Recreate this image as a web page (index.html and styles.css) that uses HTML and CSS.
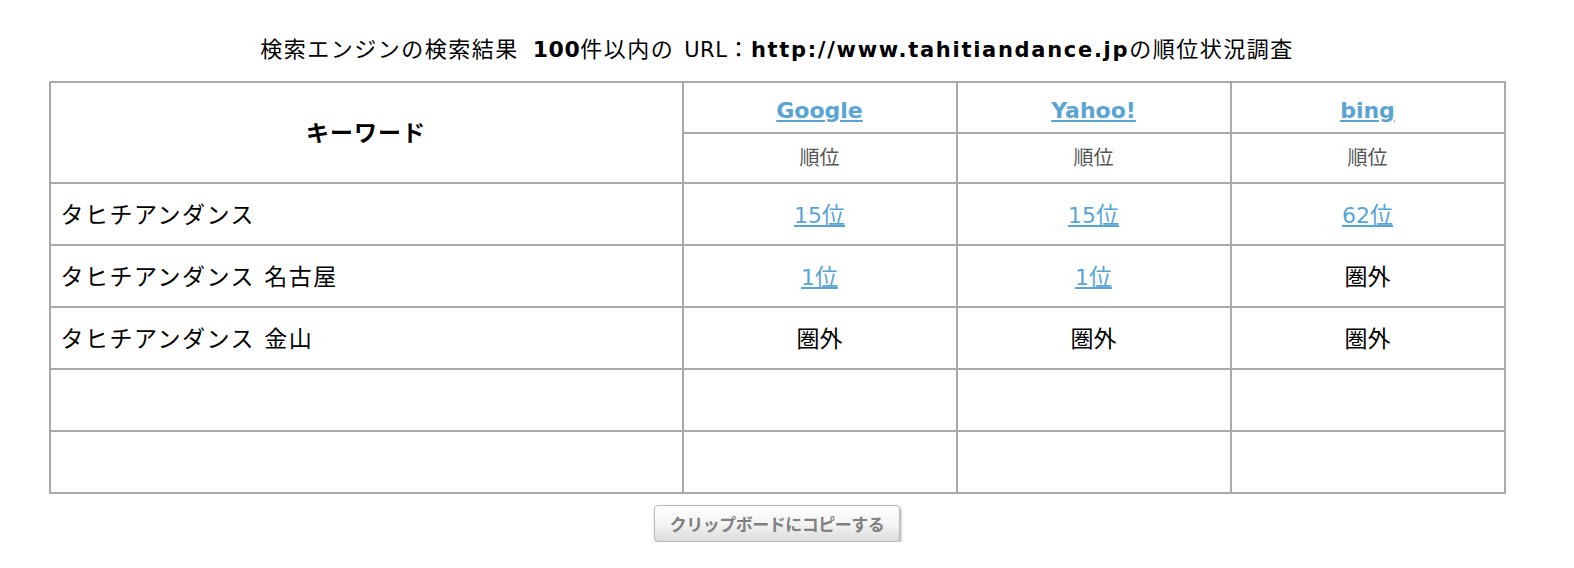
FILE: index.html
```html
<!DOCTYPE html>
<html lang="ja">
<head>
<meta charset="utf-8">
<title>順位状況調査</title>
<link rel="stylesheet" href="styles.css">
</head>
<body>
<div class="page">
  <h1 class="title">検索エンジンの検索結果<b class="en num100">100</b>件以内の<span class="en-r">URL</span>：<b class="en url">http://www.tahitiandance.jp</b>の順位状況調査</h1>
  <table class="rank">
    <colgroup>
      <col class="c-key">
      <col class="c-eng">
      <col class="c-eng">
      <col class="c-eng">
    </colgroup>
    <thead>
      <tr class="h1">
        <th rowspan="2" class="key-head">キーワード</th>
        <th><a href="#" class="eng">Google</a></th>
        <th><a href="#" class="eng">Yahoo!</a></th>
        <th><a href="#" class="eng">bing</a></th>
      </tr>
      <tr class="h2">
        <th class="sub">順位</th>
        <th class="sub">順位</th>
        <th class="sub">順位</th>
      </tr>
    </thead>
    <tbody>
      <tr>
        <td class="kw">タヒチアンダンス</td>
        <td><a href="#" class="rk"><span class="num">15</span>位</a></td>
        <td><a href="#" class="rk"><span class="num">15</span>位</a></td>
        <td><a href="#" class="rk"><span class="num">62</span>位</a></td>
      </tr>
      <tr>
        <td class="kw">タヒチアンダンス<span class="gap"></span>名古屋</td>
        <td><a href="#" class="rk"><span class="num">1</span>位</a></td>
        <td><a href="#" class="rk"><span class="num">1</span>位</a></td>
        <td class="out">圏外</td>
      </tr>
      <tr>
        <td class="kw">タヒチアンダンス<span class="gap"></span>金山</td>
        <td class="out">圏外</td>
        <td class="out">圏外</td>
        <td class="out">圏外</td>
      </tr>
      <tr>
        <td class="kw"></td><td></td><td></td><td></td>
      </tr>
      <tr>
        <td class="kw"></td><td></td><td></td><td></td>
      </tr>
    </tbody>
  </table>
  <div class="actions">
    <button type="button" class="copy">クリップボードにコピーする</button>
  </div>
</div>
</body>
</html>
```

FILE: styles.css
```css
html, body {
  margin: 0;
  padding: 0;
  background: #ffffff;
}

body {
  font-family: "Noto Sans CJK JP", "DejaVu Sans", sans-serif;
  color: #000;
}

.page {
  width: 1554px;
  padding-top: 30px;
}

.title {
  margin: 0 0 14px;
  text-align: center;
  font-size: 22px;
  font-weight: normal;
  line-height: 34px;
  letter-spacing: 1.5px;
}

.title .en,
.title .en-r {
  font-family: "DejaVu Sans", sans-serif;
  font-size: 21px;
}

.title .en {
  font-weight: bold;
}

.title .num100 {
  margin-left: 14px;
  font-size: 22px;
  letter-spacing: 0.5px;
}

.title .en-r {
  margin-left: 10px;
  letter-spacing: 0.5px;
}

.title .url {
  letter-spacing: 1.7px;
}

.rank {
  width: 1454px;
  margin: 0 auto;
  border-collapse: collapse;
  border: 2px solid #aaaaaa;
  table-layout: fixed;
}

.c-key { width: 633px; }
.c-eng { width: 274px; }

.rank th,
.rank td {
  border: 2px solid #aaaaaa;
  padding: 0;
  text-align: center;
  vertical-align: middle;
  font-size: 23px;
}

.rank tr.h1 th {
  height: 49px;
}

.rank tr.h2 th {
  height: 45px;
}

.rank tbody td {
  height: 57px;
  padding-bottom: 3px;
}

.rank th.key-head {
  font-weight: bold;
  font-size: 23px;
  letter-spacing: 1px;
  padding-bottom: 4px;
}

.eng {
  font-family: "DejaVu Sans", sans-serif;
  font-weight: bold;
  font-size: 22px;
  color: #5aa4d3;
  text-decoration: underline;
}

.rank th.sub {
  font-weight: normal;
  color: #555555;
  font-size: 20px;
  padding-bottom: 3px;
}

.rk {
  color: #5aa4d3;
  text-decoration: underline;
}

.num {
  font-family: "DejaVu Sans", sans-serif;
  font-size: 22px;
}

.rank td.kw {
  text-align: left;
  padding-left: 10px;
  letter-spacing: 1.5px;
}

.gap {
  display: inline-block;
  width: 9px;
}

.out {
  color: #000;
}

.actions {
  display: flex;
  justify-content: center;
  padding-top: 11px;
}

.copy {
  width: 246px;
  height: 37px;
  padding: 0;
  border: 1px solid #b9b9b9;
  border-radius: 4px;
  background: linear-gradient(#ffffff 0%, #f4f4f4 50%, #dcdcdc 100%);
  box-shadow: 1px 2px 3px rgba(0, 0, 0, 0.35);
  font-family: "Noto Sans CJK JP", sans-serif;
  font-size: 17px;
  font-weight: bold;
  color: #808080;
  letter-spacing: -0.5px;
}
```
